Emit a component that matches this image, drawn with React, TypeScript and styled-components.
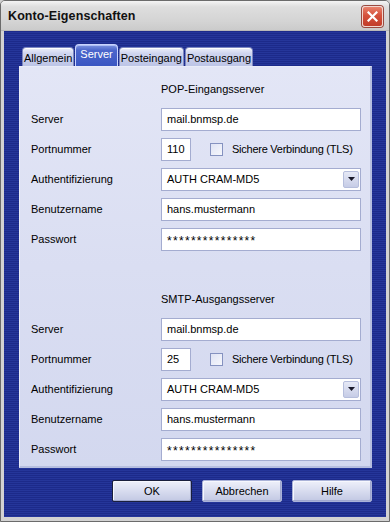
import React from "react";
import styled, { createGlobalStyle } from "styled-components";

const Global = createGlobalStyle`
  html, body { margin: 0; padding: 0; background: #d0d0d0; }
  body { font-family: "Liberation Sans", Arial, sans-serif; font-size: 11px; color: #000; }
  * { box-sizing: border-box; }
`;

const Window = styled.div`
  width: 390px;
  height: 522px;
  display: flex;
  flex-direction: column;
  border: 1px solid #6b6b6b;
  border-radius: 5px 5px 0 0;
  background: #d2d2d2;
  padding: 0 3px 4px 3px;
  overflow: hidden;
`;

const TitleBar = styled.div`
  height: 30px;
  margin: 0 -3px;
  padding: 0 6px 0 7px;
  display: flex;
  align-items: center;
  justify-content: space-between;
  background: linear-gradient(to bottom, #f4f4f4 0%, #dedede 20%, #d4d4d4 70%, #cbcbcb 100%);
  border-bottom: 1px solid #b8b8b8;
`;

const Title = styled.span`
  font-family: "Liberation Sans", Arial, sans-serif;
  font-weight: bold;
  font-size: 12.5px;
  color: #111;
  letter-spacing: 0.1px;
`;

const CloseButton = styled.div`
  width: 21px;
  height: 21px;
  border-radius: 3px;
  border: 1px solid #f3d6cf;
  background: linear-gradient(to bottom, #e9826c 0%, #d4513c 45%, #c23c2a 100%);
  box-shadow: 0 0 0 1px #9a4a40;
  display: flex;
  align-items: center;
  justify-content: center;
  margin-top: 1px;
`;

const Body = styled.div`
  flex: 1;
  display: flex;
  flex-direction: column;
  padding: 13px 14px 0 15px;
  background: repeating-linear-gradient(to bottom, #1c2a8a 0px, #1c2a8a 1px, #25369a 1px, #25369a 2px);
`;

const TabRow = styled.div`
  display: flex;
  align-items: flex-end;
  gap: 1px;
  padding-left: 3px;
  height: 22px;
  position: relative;
  z-index: 1;
`;

const Tab = styled.div<{ $active?: boolean }>`
  height: ${(p) => (p.$active ? 22 : 19)}px;
  padding: ${(p) => (p.$active ? "2px 4px 0" : "3px 1px 0")};
  border-radius: 4px 4px 0 0;
  font-size: 11px;
  line-height: 14px;
  color: ${(p) => (p.$active ? "#ffffff" : "#000000")};
  background: ${(p) =>
    p.$active
      ? "linear-gradient(to bottom, #7e94e0 0%, #4c66cc 25%, #3a56c2 100%)"
      : "linear-gradient(to bottom, #eef0fa 0%, #cfd5ef 30%, #bcc4e6 100%)"};
  border: 1px solid ${(p) => (p.$active ? "#c9d4ff" : "#7d88c0")};
  border-bottom: none;
  box-shadow: ${(p) => (p.$active ? "inset 0 1px 0 #aebdf4" : "inset 0 1px 0 #ffffff")};
  white-space: nowrap;
`;

const Panel = styled.div`
  width: 353px;
  height: 402px;
  padding: 7px 12px 0 11px;
  background: linear-gradient(to bottom, #e3e6f6 0%, #dadef2 50%, #d3d8ef 100%);
  border: 1px solid #e9ecf8;
  border-right: 2px solid #b6bedf;
  border-bottom: 2px solid #b6bedf;
  display: flex;
  flex-direction: column;
`;

const Section = styled.div<{ $gap?: boolean }>`
  display: flex;
  flex-direction: column;
  margin-top: ${(p) => (p.$gap ? 30 : 0)}px;
`;

const Heading = styled.div`
  height: 30px;
  display: flex;
  align-items: center;
  padding-left: 130px;
`;

const Row = styled.div`
  height: 30px;
  display: grid;
  grid-template-columns: 130px 1fr;
  align-items: center;
`;

const Label = styled.span`
  white-space: nowrap;
`;

const CheckLabel = styled.span`
  white-space: nowrap;
  letter-spacing: -0.25px;
`;

const Field = styled.div<{ $w?: number }>`
  width: ${(p) => p.$w ?? 200}px;
  height: 23px;
  background: #ffffff;
  border: 1px solid #a4acd0;
  padding: 0 0 0 5px;
  display: flex;
  align-items: center;
  font-size: 11px;
  white-space: nowrap;
`;

const Stars = styled.span`
  font-size: 12px;
  letter-spacing: 1.3px;
  padding-top: 3px;
`;

const Inline = styled.div`
  display: flex;
  align-items: center;
`;

const Check = styled.div`
  width: 13px;
  height: 13px;
  margin: 0 9px 0 19px;
  border: 1px solid #8592c0;
  background: linear-gradient(135deg, #dfe3f4 0%, #f6f7fc 100%);
`;

const Select = styled(Field)`
  justify-content: space-between;
  padding-right: 1px;
`;

const DropButton = styled.div`
  width: 16px;
  height: 17px;
  border: 1px solid #b6bedc;
  border-radius: 2px;
  background: linear-gradient(to bottom, #e6e9f6 0%, #c6cce6 100%);
  display: flex;
  align-items: center;
  justify-content: center;
`;

const ButtonRow = styled.div`
  display: flex;
  justify-content: flex-end;
  gap: 10px;
  margin-top: 12px;
`;

const Button = styled.div<{ $default?: boolean }>`
  width: 80px;
  height: 22px;
  display: flex;
  align-items: center;
  justify-content: center;
  font-size: 11px;
  border-radius: 2px;
  background: linear-gradient(to bottom, #eef0fa 0%, #d8dcef 50%, #c2c8e3 100%);
  border: 1px solid ${(p) => (p.$default ? "#1a1f3c" : "#aab2d8")};
  box-shadow: inset -1px -1px 0 #9fa7cf, inset 1px 1px 0 #f6f7fd;
`;

type Props = { title: string; port: string; gap?: boolean };

const ServerSection: React.FC<Props> = ({ title, port, gap }) => (
  <Section $gap={gap}>
    <Heading>{title}</Heading>
    <Row>
      <Label>Server</Label>
      <Field>mail.bnmsp.de</Field>
    </Row>
    <Row>
      <Label>Portnummer</Label>
      <Inline>
        <Field $w={30}>{port}</Field>
        <Check />
        <CheckLabel>Sichere Verbindung (TLS)</CheckLabel>
      </Inline>
    </Row>
    <Row>
      <Label>Authentifizierung</Label>
      <Select>
        <span>AUTH CRAM-MD5</span>
        <DropButton>
          <svg width="7" height="4" viewBox="0 0 7 4">
            <path d="M0 0 H7 L3.5 4 Z" fill="#1a1a2a" />
          </svg>
        </DropButton>
      </Select>
    </Row>
    <Row>
      <Label>Benutzername</Label>
      <Field>hans.mustermann</Field>
    </Row>
    <Row>
      <Label>Passwort</Label>
      <Field>
        <Stars>***************</Stars>
      </Field>
    </Row>
  </Section>
);

export default function App() {
  return (
    <>
      <Global />
      <Window>
        <TitleBar>
          <Title>Konto-Eigenschaften</Title>
          <CloseButton>
            <svg width="11" height="11" viewBox="0 0 11 11">
              <path d="M1.5 1.5 L9.5 9.5 M9.5 1.5 L1.5 9.5" stroke="#ffffff" strokeWidth="2.2" strokeLinecap="square" />
            </svg>
          </CloseButton>
        </TitleBar>
        <Body>
          <TabRow>
            <Tab>Allgemein</Tab>
            <Tab $active>Server</Tab>
            <Tab>Posteingang</Tab>
            <Tab>Postausgang</Tab>
          </TabRow>
          <Panel>
            <ServerSection title="POP-Eingangsserver" port="110" />
            <ServerSection title="SMTP-Ausgangsserver" port="25" gap />
          </Panel>
          <ButtonRow>
            <Button $default>OK</Button>
            <Button>Abbrechen</Button>
            <Button>Hilfe</Button>
          </ButtonRow>
        </Body>
      </Window>
    </>
  );
}
